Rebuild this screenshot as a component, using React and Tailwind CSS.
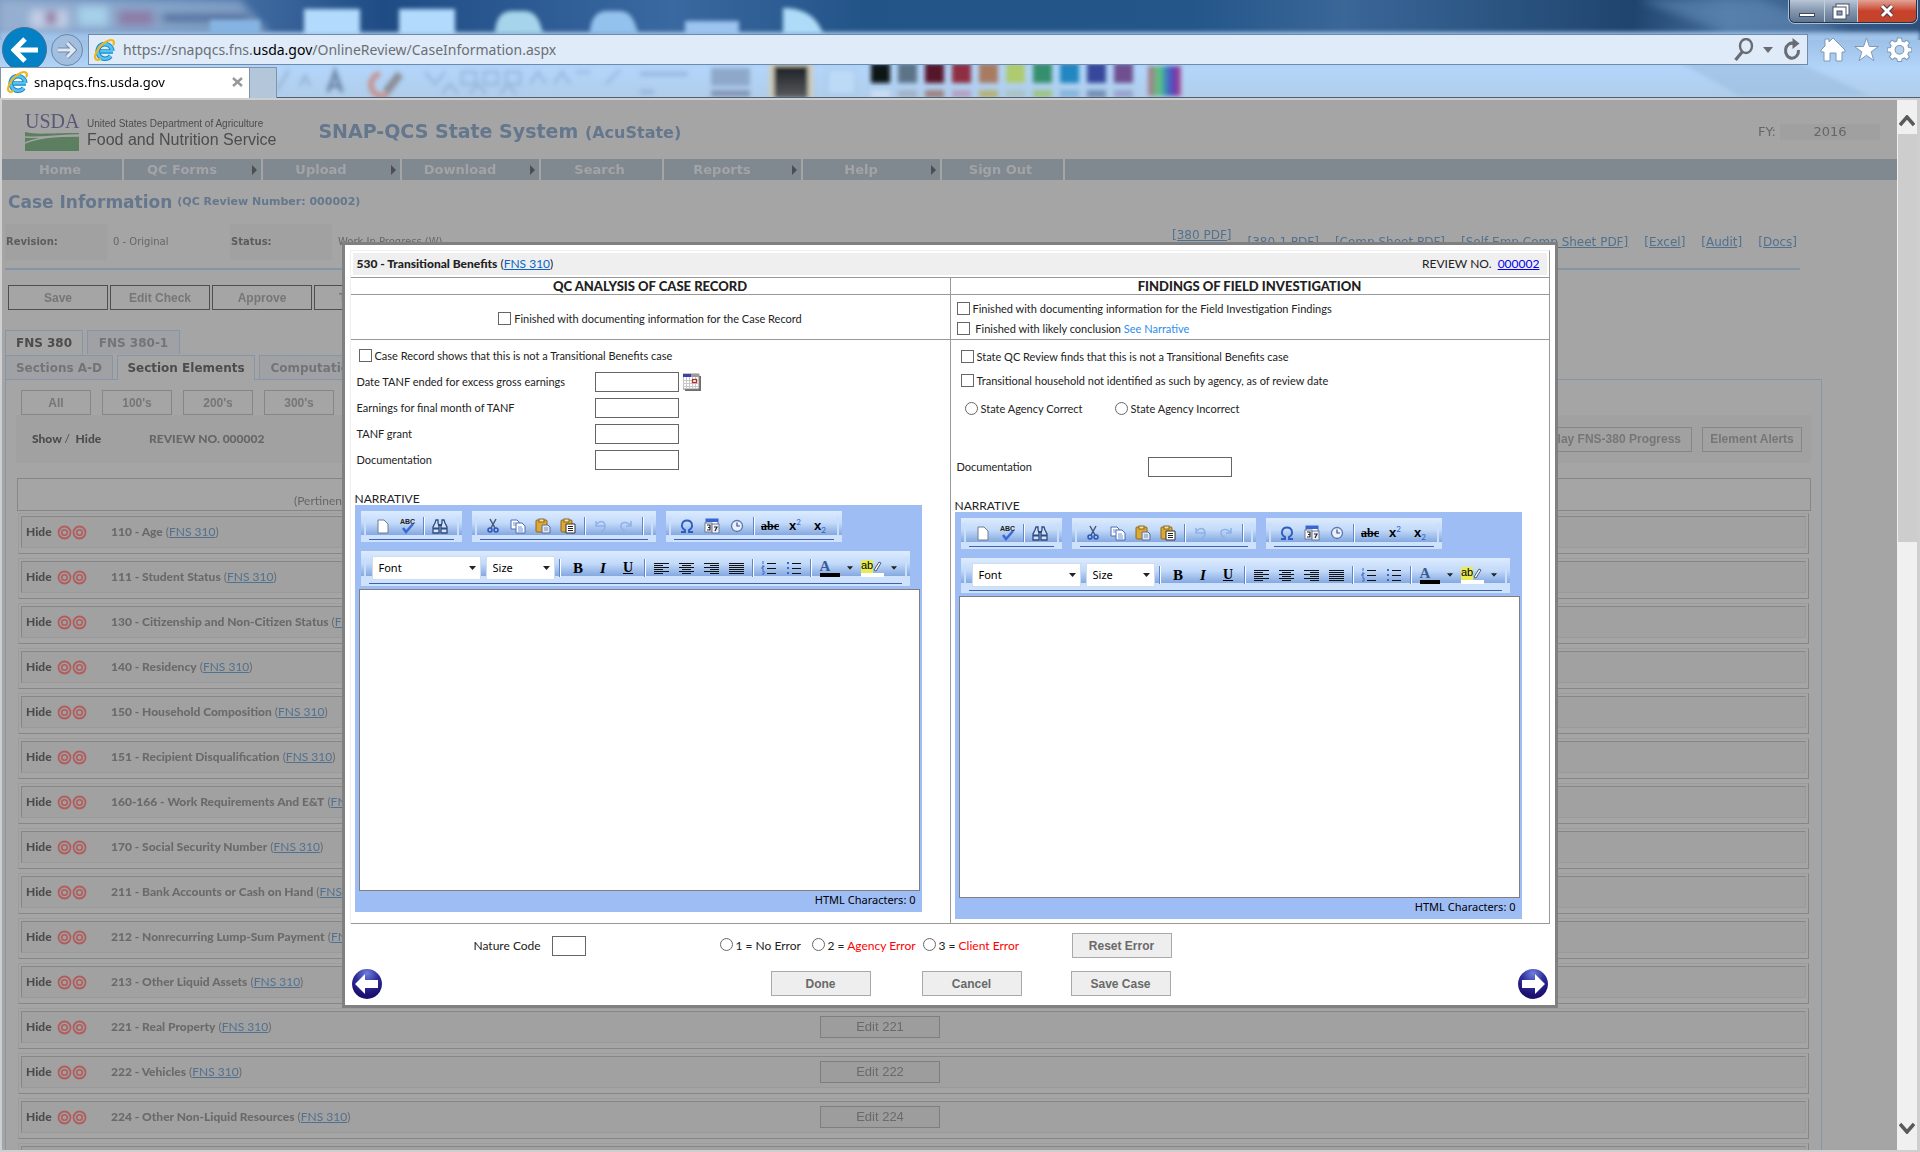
import { Fragment } from 'react';

const MENU = [
  { label: 'Home', width: 'w-[122px]' },
  { label: 'QC Forms', width: 'w-[139px]', sub: true },
  { label: 'Upload', width: 'w-[139px]', sub: true },
  { label: 'Download', width: 'w-[139px]', sub: true },
  { label: 'Search', width: 'w-[123px]' },
  { label: 'Reports', width: 'w-[139px]', sub: true },
  { label: 'Help', width: 'w-[139px]', sub: true },
  { label: 'Sign Out', width: 'w-[123px]' },
];

const ELEMENTS = [
  ['110', 'Age'],
  ['111', 'Student Status'],
  ['130', 'Citizenship and Non-Citizen Status'],
  ['140', 'Residency'],
  ['150', 'Household Composition'],
  ['151', 'Recipient Disqualification'],
  ['160-166', 'Work Requirements And E&T'],
  ['170', 'Social Security Number'],
  ['211', 'Bank Accounts or Cash on Hand'],
  ['212', 'Nonrecurring Lump-Sum Payment'],
  ['213', 'Other Liquid Assets'],
  ['221', 'Real Property'],
  ['222', 'Vehicles'],
  ['224', 'Other Non-Liquid Resources'],
  ['225', 'Combined Resources'],
];

const SWATCHES = ['#0c1218', '#5d7388', '#561329', '#8f2f42', '#a87a62', '#aecb70', '#348f6c', '#2487c0', '#38479a', '#6f4f90'];
const SWATCHES_LOW = ['#c9dcf2', '#a3b3c9', '#9c8484', '#b4a2c4', '#b4b27c', '#a9c4c4', '#9cc486', '#86b6da', '#7590b4', '#98a4cc'];

/* ---------- browser window ---------- */

function Glass() {
  return (
    <svg className="absolute inset-0 w-full h-full" aria-hidden="true">
      <defs>
        <linearGradient id="sky" x1="0" x2="1">
          <stop offset="0" stopColor="#7e9cc4" />
          <stop offset="0.1" stopColor="#4d78ad" />
          <stop offset="0.2" stopColor="#1f4c84" />
          <stop offset="0.35" stopColor="#3a68a0" />
          <stop offset="0.45" stopColor="#235488" />
          <stop offset="0.62" stopColor="#24568a" />
          <stop offset="0.7" stopColor="#3a6698" />
          <stop offset="0.85" stopColor="#1f456e" />
          <stop offset="0.9" stopColor="#456f9c" />
          <stop offset="1" stopColor="#2b4d78" />
        </linearGradient>
        <linearGradient id="bar" x1="0" x2="0" y1="0" y2="1">
          <stop offset="0" stopColor="#9dc0e6" />
          <stop offset="0.5" stopColor="#b3d5fa" />
          <stop offset="1" stopColor="#b0cdea" />
        </linearGradient>
        <linearGradient id="ink" x1="0" x2="0" y1="0" y2="1">
          <stop offset="0" stopColor="#1b1e24" />
          <stop offset="1" stopColor="#5a5c60" />
        </linearGradient>
        <linearGradient id="rainbow" x1="0" x2="1">
          <stop offset="0" stopColor="#b0708c" />
          <stop offset="0.35" stopColor="#58c880" />
          <stop offset="0.6" stopColor="#3a70c8" />
          <stop offset="0.8" stopColor="#6838b0" />
          <stop offset="1" stopColor="#b0508c" />
        </linearGradient>
        <filter id="soft"><feGaussianBlur stdDeviation="4" /></filter>
        <filter id="softer"><feGaussianBlur stdDeviation="2" /></filter>
      </defs>
      <rect width="100%" height="40" fill="url(#sky)" />
      <g filter="url(#soft)">
        <path d="M0 0h240l30 34H0z" fill="#a9bedb" opacity="0.6" />
        <rect x="30" y="10" width="38" height="18" fill="#c3cfe6" />
        <rect x="46" y="12" width="10" height="12" fill="#8a5a8c" />
        <rect x="78" y="6" width="30" height="20" fill="#a6d0ea" />
        <rect x="118" y="10" width="36" height="16" fill="#8c7ba8" />
        <rect x="162" y="14" width="88" height="8" fill="#3d6296" />
        <path d="M1640 0h120l90 34h-120z" fill="#6a92bc" opacity="0.5" />
      </g>
      <rect y="32" width="100%" height="66" fill="url(#bar)" filter="url(#softer)" />
      <rect y="40" width="100%" height="58" fill="url(#bar)" />
      <g filter="url(#softer)">
        <rect x="210" y="20" width="50" height="14" fill="#86b4e2" />
        <rect x="304" y="9" width="56" height="26" fill="#b2dafc" />
        <rect x="399" y="9" width="56" height="26" fill="#b2dafc" />
        <path d="M495 34c0-14 6-23 16-23h14c10 0 15 9 18 23z" fill="#a6d4ea" />
        <path d="M590 34c0-14 6-23 16-23h14c10 0 15 9 18 23z" fill="#94c2ee" />
        <rect x="685" y="21" width="54" height="14" fill="#9cc4f0" />
        <path d="M783 34V8c20 0 34 8 40 26z" fill="#aedcf8" />
        <path d="M1640 40h110l120 56h-130z" fill="#9bbddd" opacity="0.6" />
        <g opacity="0.6">
          <path d="M277 90l12-20M300 86l5-10 5 10" stroke="#8fa3c0" strokeWidth="3" fill="none" />
          <path d="M328 92l7-20 7 20M331 86h8" stroke="#48607f" strokeWidth="4" fill="none" />
          <path d="M380 74a11 11 0 1 0 8 20" stroke="#d0705c" strokeWidth="6" fill="none" />
          <path d="M386 92l14-18" stroke="#76655c" strokeWidth="8" />
        </g>
        <g opacity="0.45" stroke="#7f9fca" strokeWidth="3" fill="none">
          <path d="M425 72l10 12 10-12M442 94l8-10 8 10M470 94l8-10 8 10M500 94l8-10 8 10" />
          <path d="M462 72h14v12h-14zM484 72h14v12h-14zM506 72h14v12h-14zM530 84l8-12 8 12M554 84l8-12 8 12M576 72h14M606 84l14-14" />
          <path d="M640 74h48M640 92h14" strokeWidth="5" />
        </g>
        <rect x="711" y="68" width="39" height="18" fill="#8ea8ca" />
        <rect x="711" y="90" width="39" height="7" fill="#8498ba" />
        <rect x="769" y="62" width="44" height="36" fill="#d0ccba" />
        <rect x="774" y="66" width="34" height="32" fill="url(#ink)" />
        <rect x="828" y="70" width="27" height="24" fill="#bcdaf6" stroke="#a0c0e4" />
        {SWATCHES.map((c, i) => <rect key={c} x={871 + i * 27} y="63" width="19" height="20" fill={c} />)}
        {SWATCHES_LOW.map((c, i) => <rect key={c} x={871 + i * 27} y="90" width="19" height="8" fill={c} />)}
        <rect x="1148" y="66" width="33" height="30" fill="url(#rainbow)" />
      </g>
    </svg>
  );
}

function IeLogo() {
  return (
    <svg width="24" height="24" viewBox="0 0 24 24" aria-hidden="true">
      <path d="M20 13.500H7.500M19.300 13a7.300 7.300 0 1 0-1.600 5" fill="none" stroke="#1787c9" strokeWidth="4.600" />
      <path d="M20 13.300H8M19.300 13a7.300 7.300 0 1 0-1.600 5" fill="none" stroke="#55c3f0" strokeWidth="2.600" />
      <path d="M20.500 6.500C22 2.500 19 .8 14.500 3 8 6 2.500 13 2 18.500c-.2 3 2 4 5 2.800" fill="none" stroke="#f2b61c" strokeWidth="2.200" strokeLinecap="round" />
    </svg>
  );
}

function WindowButtons() {
  return (
    <div className="flex h-[23px] w-[128px] border border-t-0 border-[#23344c] rounded-b-md overflow-hidden shadow-[0_0_0_1px_#a9bfd8]">
      <button aria-label="Minimize" className="w-[35px] flex items-end justify-center pb-[5px] bg-linear-to-b from-[#b9c6d6] via-[#8496ae] to-[#5f7690] border-r border-[#c3cfdd]">
        <span className="w-4 h-1 bg-white border border-[#3c4a60]" />
      </button>
      <button aria-label="Restore" className="w-[33px] flex items-center justify-center bg-linear-to-b from-[#b9c6d6] via-[#8496ae] to-[#5f7690] border-r border-[#c3cfdd]">
        <svg width="18" height="17" viewBox="0 0 18 17">
          <rect x="4" y="1" width="13" height="11" fill="#fff" stroke="#465066" />
          <rect x="1" y="4" width="13" height="12" fill="#fff" stroke="#465066" />
          <rect x="5" y="8" width="5" height="4" fill="#8b9bb3" stroke="#465066" />
        </svg>
      </button>
      <button aria-label="Close" className="flex-1 flex items-center justify-center bg-linear-to-b from-[#e2a295] via-[#c8412a] to-[#c2452c]">
        <svg width="16" height="14" viewBox="0 0 16 14">
          <path d="M3 2l10 10M13 2L3 12" stroke="#4a3c48" strokeWidth="5" />
          <path d="M3 2l10 10M13 2L3 12" stroke="#fff" strokeWidth="3" />
        </svg>
      </button>
    </div>
  );
}

function BrowserChrome() {
  return (
    <header className="relative shrink-0 h-[98px] border-b border-[#4f5f74] font-['Noto_Sans','Open_Sans',sans-serif]">
      <Glass />
      <div className="relative flex flex-col">
        <div className="h-[34px] flex justify-end pr-[3px]">
          <WindowButtons />
        </div>
        <div className="h-[31px] flex items-center">
          <button aria-label="Back" className="ml-[2px] -my-2 w-[45px] h-[45px] rounded-full bg-[#0481c4] border border-[#3b6f9c] flex items-center justify-center shrink-0">
            <svg width="28" height="26" viewBox="0 0 28 26"><path d="M27 13H5M14 2L3 13l11 11" fill="none" stroke="#fff" strokeWidth="5" /></svg>
          </button>
          <button aria-label="Forward" className="ml-[4px] w-[32px] h-[32px] rounded-full border border-[#6c86a6] bg-[#a3bfdf] flex items-center justify-center shrink-0">
            <svg width="20" height="18" viewBox="0 0 20 18"><path d="M1 9h15M10 2l7 7-7 7" fill="none" stroke="#6f86a4" strokeWidth="5" /><path d="M1 9h15M10 2l7 7-7 7" fill="none" stroke="#dfe8f3" strokeWidth="3" /></svg>
          </button>
          <div className="ml-[5px] flex-1 h-[31px] border border-[#6f8bab] bg-[#dfebf8] flex items-center pl-1 pr-[6px]">
            <IeLogo />
            <div role="textbox" aria-label="Address" className="ml-[6px] flex-1 text-[14px] leading-5 text-[#6b6f74]">
              https://snapqcs.fns.<span className="text-black">usda.gov</span>/OnlineReview/CaseInformation.aspx
            </div>
            <button aria-label="Search" className="flex items-center">
              <svg width="20" height="24" viewBox="0 0 20 24"><ellipse cx="12" cy="8" rx="6" ry="7" fill="none" stroke="#696d73" strokeWidth="2.400" /><path d="M8.500 13.500L1.500 22" stroke="#696d73" strokeWidth="3.200" /></svg>
              <svg className="ml-[9px]" width="10" height="6"><path d="M0 0h10L5 6z" fill="#696d73" /></svg>
            </button>
            <button aria-label="Refresh" className="ml-[10px]">
              <svg width="18" height="23" viewBox="0 0 18 23"><path d="M11 5.500A6.500 7.500 0 1 0 15.500 12" fill="none" stroke="#696d73" strokeWidth="3" /><path d="M9.500 0l7 5.500-7 5.500z" fill="#696d73" /></svg>
            </button>
          </div>
          <div className="w-[112px] flex items-center pl-3 gap-2">
            <button aria-label="Home">
              <svg width="26" height="25" viewBox="0 0 26 25"><path d="M13 1l-4 4V2H5v7l-4 4v2h3v9h6v-8h6v8h6v-9h3v-2z" fill="#fff" stroke="#7d99b8" /></svg>
            </button>
            <button aria-label="Favorites">
              <svg width="25" height="25" viewBox="0 0 25 25"><path d="M12.500 1l2.900 8.500h9l-7.200 5.300 2.700 8.900-7.400-5.400-7.400 5.400 2.700-8.900L.6 9.500h9z" fill="#fff" stroke="#7d99b8" /></svg>
            </button>
            <button aria-label="Tools">
              <svg width="25" height="25" viewBox="0 0 24 24">
                <path d="M10 1h4l.5 3 2 .8L19 3l2.600 2.700-1.600 2.500.8 2 3 .4v3.500l-3 .5-.8 2 1.600 2.500L19 21.700l-2.500-1.600-2 .8-.5 2.700h-4l-.5-2.700-2-.8L5 21.700l-2.700-2.600L4 16.600l-.8-2-3-.5v-3.500l3-.4.8-2-1.700-2.500L5 3l2.500 1.700 2-.8z" fill="#fff" stroke="#7d99b8" />
                <circle cx="12" cy="12.300" r="4.200" fill="#b5cfec" stroke="#7d99b8" />
              </svg>
            </button>
          </div>
        </div>
        <div className="pt-[2px] h-[33px] flex">
          <div className="w-[250px] bg-white border border-b-0 border-[#7f93aa] flex items-center pl-[5px] pr-[6px] pb-[2px]">
            <IeLogo />
            <span className="ml-[4px] flex-1 text-[13px] leading-5 text-black">snapqcs.fns.usda.gov</span>
            <button aria-label="Close tab">
              <svg width="11" height="10" viewBox="0 0 11 10"><path d="M1 1l9 8M10 1L1 9" stroke="#989898" strokeWidth="2.400" /></svg>
            </button>
          </div>
          <button aria-label="New tab" className="w-[27px] bg-[#b3c6da] border-t border-r border-[#7f93aa]" />
        </div>
      </div>
    </header>
  );
}

function Scrollbar() {
  return (
    <div className="w-[20px] shrink-0 bg-[#f0f0f0] flex flex-col items-center" aria-hidden="true">
      <div className="h-[34px] flex items-center pt-2">
        <svg width="16" height="12"><path d="M1 10l7-8 7 8" fill="none" stroke="#5a5a5a" strokeWidth="3.500" /></svg>
      </div>
      <div className="h-[408px] w-[19px] bg-[#cdcdcd]" />
      <div className="flex-1" />
      <div className="h-[28px]">
        <svg width="16" height="12"><path d="M1 2l7 8 7-8" fill="none" stroke="#5a5a5a" strokeWidth="3.500" /></svg>
      </div>
    </div>
  );
}

/* ---------- dimmed case page ---------- */

function UsdaLogo() {
  return (
    <div className="flex items-center gap-[8px]">
      <div className="w-[54px]">
        <p className="font-['Liberation_Serif',serif] text-[20px] leading-[17px] text-[#5a5877] text-center">USDA</p>
        <svg className="mt-[2px] block" width="54" height="19" viewBox="0 0 54 19">
          <path d="M0 0c12 3 24 1 54 1v18H0z" fill="#5c7f60" />
          <path d="M0 5c16 1 34-2 54-2M0 11c14-6 30-7 54-7" stroke="#a5a5a5" strokeWidth="1.500" fill="none" />
        </svg>
      </div>
      <div className="font-['Liberation_Sans',sans-serif] text-[#4c4c4c]">
        <p className="text-[10px] leading-4">United States Department of Agriculture</p>
        <p className="text-[16px] leading-4 font-medium">Food and Nutrition Service</p>
      </div>
    </div>
  );
}

function GreyButton({ children, className }) {
  return (
    <button className={`h-[25px] border font-bold text-[12px] leading-4 text-[#767676] font-['Liberation_Sans',sans-serif] ${className}`}>
      {children}
    </button>
  );
}

function Target() {
  return (
    <svg width="15" height="15" viewBox="0 0 15 15" aria-hidden="true">
      <circle cx="7.500" cy="7.500" r="6" fill="none" stroke="#b25c5c" strokeWidth="1.800" />
      <circle cx="7.500" cy="7.500" r="2.800" fill="none" stroke="#b25c5c" strokeWidth="1.600" />
    </svg>
  );
}

function ElementRow({ code, name }) {
  return (
    <div className="mx-[2px] h-[41px] border border-t-[#9c9c9c] border-l-[#9c9c9c] border-r-[#868686] border-b-[#868686] p-[2px] pb-[5px]">
      <div className="h-full bg-[#a1a1a1] border border-t-[#868686] border-l-[#868686] border-r-[#9a9a9a] border-b-[#9a9a9a] flex items-center text-[12px] leading-4">
        <span className="ml-1 w-[31px] font-black text-[#4c4c4c]">Hide</span>
        <span className="flex w-[54px]"><Target /><Target /></span>
        <span className="w-[709px] text-[#6a6a6a]">
          <b className="font-black">{code} - {name}</b> (<a href="#fns" className="underline text-[#52718f]">FNS 310</a>)
        </span>
        <button className="w-[120px] h-[22px] border border-[#7e7e7e] bg-[#9d9d9d] font-['Liberation_Sans',sans-serif] text-[13px] leading-4 text-[#6a6a6a]">Edit {code}</button>
      </div>
    </div>
  );
}

function CasePage() {
  return (
    <div className="flex-1 min-w-0 bg-[#a5a5a5] overflow-hidden font-['DejaVu_Sans',sans-serif] text-[#666]">
      <div className="h-[59px] pt-[5px] flex items-center pl-[23px] pr-[17px]">
        <UsdaLogo />
        <h1 className="ml-[42px] font-bold text-[19px] leading-6 text-[#64778d]">SNAP-QCS State System <span className="text-[16px]">(AcuState)</span></h1>
        <div className="ml-auto flex items-center gap-1 text-[13px] leading-4">
          <span>FY:</span>
          <span className="w-[100px] text-center bg-[#a0a0a0]">2016</span>
        </div>
      </div>

      <nav className="h-[21px] bg-[#808890] flex text-[13px] font-bold leading-[21px] text-[#a2a4a6]">
        {MENU.map((m) => (
          <a key={m.label} href="#menu" className={`${m.width} shrink-0 border-r-2 border-[#a5a5a5] flex items-center pr-1`}>
            <span className="flex-1 text-center">{m.label}</span>
            {m.sub && <svg className="ml-3" width="5" height="10"><path d="M0 0l5 5-5 5z" fill="#4e4e4e" /></svg>}
          </a>
        ))}
      </nav>

      <h2 className="h-[44px] pl-[6px] flex items-center gap-[5px] font-bold text-[17px] leading-6 text-[#64778d]">
        Case Information <span className="text-[11px]">(QC Review Number: 000002)</span>
      </h2>

      <div className="ml-[3px] mr-[97px] pr-[3px] pb-[8px] h-[46px] border-b-2 border-[#8596a8] flex text-[10px] leading-9">
        <b className="w-[102px] bg-[#a1a1a1] pl-px text-[#5c5c5c]">Revision:</b>
        <span className="w-[123px] pl-[6px]">0 - Original</span>
        <b className="w-[102px] bg-[#a1a1a1] pl-px text-[#5c5c5c]">Status:</b>
        <span className="flex-1 pl-[6px]">Work In Progress (W)</span>
        <div className="flex gap-[16px] text-[12px] underline text-[#52718f]">
          <a href="#pdf" className="leading-[22px]">[380 PDF]</a>
          {['[380-1 PDF]', '[Comp Sheet PDF]', '[Self Emp Comp Sheet PDF]', '[Excel]', '[Audit]', '[Docs]'].map((t) => (
            <a key={t} href="#pdf">{t}</a>
          ))}
        </div>
      </div>

      <div className="mt-[15px] ml-[6px] flex gap-[2px]">
        {['Save', 'Edit Check', 'Approve', 'Transmit'].map((t) => (
          <GreyButton key={t} className="w-[100px] border-[#4f4f4f]">{t}</GreyButton>
        ))}
      </div>

      <div className="ml-[3px] mr-[75px] mt-[20px]">
        <div role="tablist" className="flex gap-1 text-[12px] font-bold leading-6">
          <button role="tab" aria-selected="true" className="w-[78px] h-[25px] border border-b-0 border-[#8596a8] text-[#4c4c4c]">FNS 380</button>
          <button role="tab" className="w-[93px] h-[24px] bg-[#9fa1a4] border border-b-0 border-[#8596a8] text-[#727476]">FNS 380-1</button>
        </div>
        <div role="tablist" className="flex gap-1 text-[12px] font-bold leading-6">
          <button role="tab" className="w-[108px] h-[24px] bg-[#9fa1a4] border border-b-0 border-[#8596a8] text-[#727476]">Sections A-D</button>
          <button role="tab" aria-selected="true" className="w-[138px] h-[25px] -mb-px bg-[#a5a5a5] border border-b-0 border-[#8596a8] text-[#4c4c4c]">Section Elements</button>
          <button role="tab" className="w-[110px] h-[24px] bg-[#9fa1a4] border border-b-0 border-[#8596a8] text-[#727476]">Computation</button>
        </div>
        <div className="border border-[#8596a8] px-[10px] pt-[10px] font-['Lato',sans-serif]">
          <div className="ml-[5px] flex gap-[11px]">
            {['All', "100's", "200's", "300's"].map((t) => (
              <GreyButton key={t} className="w-[70px] border-[#868686]">{t}</GreyButton>
            ))}
          </div>
          <div className="h-[48px] pl-[16px] pr-[9px] bg-[#a1a1a1] flex items-center text-[12px] leading-4 font-black">
            <span className="w-[117px] text-[#4c4c4c]">Show <span className="font-normal">/</span>&nbsp; Hide</span>
            <span>REVIEW NO. 000002</span>
            <GreyButton className="ml-auto px-[10px] border-[#868686]">Display FNS-380 Progress</GreyButton>
            <GreyButton className="ml-[10px] w-[100px] border-[#868686]">Element Alerts</GreyButton>
          </div>
          <div className="mt-[15px] mb-[2px] ml-px h-[33px] border border-[#868686] pl-[276px] pt-[14px] text-[12px] leading-4">(Pertinent facts)</div>
          <div className="flex flex-col gap-1">
            {ELEMENTS.map(([code, name]) => <ElementRow key={code} code={code} name={name} />)}
          </div>
        </div>
      </div>
    </div>
  );
}

/* ---------- rich text editor ---------- */

const icons = {
  doc: <path d="M4 2h6l4 4v9H4z" fill="#fff" stroke="#6f7c92" />,
  spell: <><text x="1" y="6" fontSize="7" fontWeight="bold" fontFamily="Liberation Sans" fill="#222">ABC</text><path d="M4 10l3 4 7-8" fill="none" stroke="#3d68d8" strokeWidth="2.500" /></>,
  find: <><path d="M4 2h2v3l1 3v7H1V9l2-4zM10 2h2l1 3 2 4v6H9V8l1-3z" fill="#d4e2f8" stroke="#2f4a80" strokeWidth="1.300" /><path d="M6 7h4M1 10.500h6M9 10.500h6" stroke="#2f4a80" strokeWidth="2" /></>,
  cut: <><path d="M5 1l5 9M11 1L6 10" stroke="#48577a" strokeWidth="1.500" /><circle cx="5" cy="12" r="2" fill="none" stroke="#2d55b8" strokeWidth="1.500" /><circle cx="11" cy="12" r="2" fill="none" stroke="#2d55b8" strokeWidth="1.500" /></>,
  copy: <><path d="M1 2h6l2 2v7H1z" fill="#fff" stroke="#4c6cb4" /><path d="M6 5h6l3 3v7H6z" fill="#fff" stroke="#4c6cb4" /><path d="M3 5h3M3 7h3M8 9h4M8 11h5M8 13h5" stroke="#6a90dc" /></>,
  paste: <><rect x="1" y="2" width="11" height="12" rx="1" fill="#dda836" stroke="#8a6820" /><rect x="4" y="1" width="5" height="3" fill="#f6e2a0" stroke="#8a6820" /><path d="M7 7h6l2 2v6H7z" fill="#dfe7f6" stroke="#5b6f96" /><path d="M9 10h4M9 12h4" stroke="#7a8eb8" /></>,
  pasteText: <><rect x="1" y="2" width="11" height="12" rx="1" fill="#dda836" stroke="#8a6820" /><rect x="4" y="1" width="5" height="3" fill="#f6e2a0" stroke="#8a6820" /><path d="M6 6h9v9H6z" fill="#fff" stroke="#333" /><path d="M8 8.500h5M8 10.500h5M8 12.500h5" stroke="#222" /></>,
  undo: <path d="M3 8h9c0-5-5-6-8-2M3 3v5h5M12 8c0 3-2 5-4 6" fill="none" stroke="#8eb0e8" strokeWidth="1.500" />,
  redo: <path d="M13 3v5H8M12 7C9 3 3 4 3 8c0 3 2 4 4 5" fill="none" stroke="#8eb0e8" strokeWidth="1.500" />,
  omega: <path d="M2 14h4v-2C3.500 10.500 2.500 8.500 3 6.500 3.500 3.800 5.500 2.500 8 2.500s4.500 1.300 5 4c.5 2-.5 4-3 5.500v2h4" fill="none" stroke="#2e5cc0" strokeWidth="1.900" />,
  date: <><rect x="2" y="1" width="12" height="10" fill="#fff" stroke="#3a66cc" /><rect x="2" y="1" width="12" height="3" fill="#3a66cc" /><rect x="1" y="5" width="7" height="9" fill="#fff" stroke="#6a7a98" /><rect x="8" y="6" width="7" height="9" fill="#eef2fa" stroke="#6a7a98" /><path d="M3 7h3v5H3M4 9.500h2M10 9h3l-2 4" fill="none" stroke="#222" strokeWidth="1.200" /></>,
  time: <><circle cx="8" cy="8" r="5.500" fill="#eaf1fc" stroke="#5a76ac" strokeWidth="1.300" /><path d="M8 4.500V8h3" fill="none" stroke="#3c5080" strokeWidth="1.200" /></>,
};

const icon = (name) => <svg width="16" height="16" viewBox="0 0 16 16" aria-hidden="true">{icons[name]}</svg>;

function Lines({ rows }) {
  return (
    <svg width="15" height="13" aria-hidden="true">
      {rows.map(([x, w], i) => <rect key={i} x={x} y={1 + i * 2} width={w} height="1" fill="#111" />)}
    </svg>
  );
}

const LEFT = [[0, 15], [0, 9], [0, 15], [0, 9], [0, 15], [0, 9]];
const CENTER = [[0, 15], [3, 9], [0, 15], [3, 9], [0, 15], [3, 9]];
const RIGHT = [[0, 15], [6, 9], [0, 15], [6, 9], [0, 15], [6, 9]];
const FULL = [[0, 15], [0, 15], [0, 15], [0, 15], [0, 15], [0, 15]];

function Tool({ label, children, wide }) {
  return <button aria-label={label} className={`${wide ? 'w-[43px]' : 'w-[25px]'} h-[18px] flex items-center justify-center text-black`}>{children}</button>;
}

const Sep = ({ wide }) => (
  <span className={`${wide ? 'w-[11px]' : 'w-2'} h-[18px] flex justify-center`}>
    <span className="w-[2px] border-l border-[#5f86cc] bg-white" />
  </span>
);

const Caret = ({ small }) => (
  <svg width={small ? 6 : 7} height="4" viewBox="0 0 7 4" aria-hidden="true"><path d="M0 0h7L3.500 4z" fill="#222" /></svg>
);

function Strip({ tall, children }) {
  return (
    <div className="bg-[#cfe2fc]">
      <div className={`${tall ? 'h-[25px] pt-[9px]' : 'h-[24px] pt-[6px]'} px-[3px] flex items-center bg-linear-to-b from-[#dcebff] via-[#c3daf9] to-[#84a8e0]`}>
        <span className="mr-1 w-[2px] h-[20px] bg-[#c9defb]" />
        {children}
        <span className="ml-1 w-[2px] h-[20px] bg-[#c9defb]" />
      </div>
      <div className={`${tall ? 'h-[10px] pt-[7px]' : 'h-[7px] pt-1'} px-2`}>
        <div className="h-px bg-[#3e62b0]" />
      </div>
    </div>
  );
}

function Picker({ label, width }) {
  return (
    <span className={`relative ${width} h-[24px]`}>
      <select aria-label={label} defaultValue="" className="w-full h-full appearance-none bg-white border border-[#cfdcee] pl-[6px] text-[11px] leading-4 text-black font-['Noto_Sans',sans-serif]">
        <option value="">{label}</option>
      </select>
      <span className="absolute right-[5px] top-[10px] pointer-events-none flex"><Caret /></span>
    </span>
  );
}

function Editor({ id }) {
  return (
    <div className="w-[567px] bg-[#9fbdf5] pl-[4px] pr-[2px] pt-[6px]">
      <div className="pl-[2px] flex gap-[10px]">
        <Strip>
          <Tool label="New">{icon('doc')}</Tool>
          <Tool label="Spell check">{icon('spell')}</Tool>
          <Sep />
          <Tool label="Find">{icon('find')}</Tool>
        </Strip>
        <Strip>
          <Tool label="Cut">{icon('cut')}</Tool>
          <Tool label="Copy">{icon('copy')}</Tool>
          <Tool label="Paste">{icon('paste')}</Tool>
          <Tool label="Paste as text">{icon('pasteText')}</Tool>
          <Sep />
          <Tool label="Undo">{icon('undo')}</Tool>
          <Tool label="Redo">{icon('redo')}</Tool>
          <Sep />
        </Strip>
        <Strip>
          <Tool label="Symbol">{icon('omega')}</Tool>
          <Tool label="Date">{icon('date')}</Tool>
          <Tool label="Time">{icon('time')}</Tool>
          <Sep />
          <Tool label="Strikethrough"><s className="text-[12px] leading-4 font-['Liberation_Serif',serif] font-bold">abc</s></Tool>
          <Tool label="Superscript"><b className="text-[13px] leading-4 font-['Liberation_Sans',sans-serif]">x</b><span className="self-start text-[8px] leading-[10px] text-[#2e5cc0]">2</span></Tool>
          <Tool label="Subscript"><b className="text-[13px] leading-4 font-['Liberation_Sans',sans-serif]">x</b><span className="self-end text-[8px] leading-[10px] text-[#2e5cc0]">2</span></Tool>
        </Strip>
      </div>
      <div className="pl-[2px] mt-[9px] flex">
        <Strip tall>
          <span className="ml-[2px] mr-[5px] flex"><Picker label="Font" width="w-[109px]" /></span>
          <Picker label="Size" width="w-[69px]" />
          <Sep wide />
          <Tool label="Bold"><b className="font-['Liberation_Serif',serif] text-[15px] leading-4">B</b></Tool>
          <Tool label="Italic"><b className="italic font-['Liberation_Serif',serif] text-[15px] leading-4">I</b></Tool>
          <Tool label="Underline"><b className="underline font-['Liberation_Serif',serif] text-[14px] leading-4">U</b></Tool>
          <Sep />
          <Tool label="Align left"><Lines rows={LEFT} /></Tool>
          <Tool label="Align center"><Lines rows={CENTER} /></Tool>
          <Tool label="Align right"><Lines rows={RIGHT} /></Tool>
          <Tool label="Justify"><Lines rows={FULL} /></Tool>
          <Sep />
          <Tool label="Numbered list">
            <svg width="16" height="14"><path d="M2 0v3M1 5h2v1H1v2h2M1 10h2v3H1" fill="none" stroke="#3d68c8" /><path d="M6 2.500h9M6 7.500h9M6 12.500h9" stroke="#111" /></svg>
          </Tool>
          <Tool label="Bulleted list">
            <svg width="16" height="14"><path d="M1 2h2M1 7h2M1 12h2" stroke="#3d68c8" strokeWidth="2" /><path d="M6 2.500h9M6 7.500h9M6 12.500h9" stroke="#111" /></svg>
          </Tool>
          <Sep />
          <Tool wide label="Font color">
            <span className="w-[20px] mr-[7px] border-b-4 border-black text-left leading-[13px] text-[15px] font-bold text-[#3a5a96] font-['Liberation_Serif',serif]">A</span>
            <Caret small />
          </Tool>
          <Tool wide label="Highlight">
            <span className="flex w-[23px] mr-[7px] border-b-4 border-white">
              <span className="h-[13px] bg-[#e8ec50] text-[11px] leading-[11px] font-['Liberation_Sans',sans-serif]">ab</span>
              <svg width="9" height="12" viewBox="0 0 9 12"><path d="M1 10l5-8 2 1-5 8z" fill="#fff" stroke="#4a5a76" /></svg>
            </span>
            <Caret small />
          </Tool>
        </Strip>
      </div>
      <textarea id={id} className="mt-[3px] block w-full h-[302px] bg-white border border-[#7f7f7f] resize-none" />
      <p className="h-[21px] pr-1 text-right text-[11px] leading-[18px] text-black font-['Noto_Sans',sans-serif]">HTML Characters: 0</p>
    </div>
  );
}

/* ---------- dialog ---------- */

const Check = ({ children, className = '' }) => (
  <label className={`flex items-center gap-[3px] ${className}`}>
    <input type="checkbox" className="appearance-none w-[13px] h-[13px] mb-[2px] bg-white border border-[#666]" />
    <span>{children}</span>
  </label>
);

const Radio = ({ name, children, className = '' }) => (
  <label className={`flex items-center gap-[3px] ${className}`}>
    <input type="radio" name={name} className="appearance-none w-[13px] h-[13px] mb-[2px] rounded-full bg-white border border-[#666]" />
    <span>{children}</span>
  </label>
);

function CalendarIcon() {
  return (
    <svg width="18" height="18" viewBox="0 0 18 18" aria-hidden="true">
      <path d="M2 3h16v15H2z" fill="#3e3e3e" opacity="0.75" />
      <path d="M0 1h16v15H0z" fill="#fff" stroke="#888" />
      <path d="M0 1h16v3H0z" fill="#9a9a9a" /><path d="M0 1h8v3H0z" fill="#3b3fa8" />
      <path d="M3.500 4v12M6.500 4v12M9.500 4v12M12.500 4v12M0 7.500h16M0 10.500h16M0 13.500h16" stroke="#c8c8c8" />
      <rect x="9.500" y="6.500" width="4" height="3" fill="#fff" stroke="#b03030" strokeWidth="1.300" />
    </svg>
  );
}

function ArrowButton({ label, flip }) {
  return (
    <button aria-label={label}>
      <svg width="30" height="30" viewBox="0 0 30 30" className={flip ? 'rotate-180' : ''}>
        <defs>
          <radialGradient id={flip ? 'ballR' : 'ballL'} cx="0.5" cy={flip ? 0.85 : 0.15} r="0.75">
            <stop offset="0" stopColor="#6f7fdc" />
            <stop offset="0.5" stopColor="#2f2f9c" />
            <stop offset="1" stopColor="#1c0f6e" />
          </radialGradient>
        </defs>
        <circle cx="15" cy="15" r="15" fill={flip ? 'url(#ballR)' : 'url(#ballL)'} />
        <path d="M3 15L13 5v6h13v8H13v6z" fill="#fff" />
      </svg>
    </button>
  );
}

const DialogButton = ({ children, className = '' }) => (
  <button className={`w-[100px] h-[25px] shrink-0 bg-[#eee] border border-[#a9a9a9] font-bold text-[12px] leading-4 text-[#696969] font-['Liberation_Sans',sans-serif] ${className}`}>
    {children}
  </button>
);

const FIELDS = ['Date TANF ended for excess gross earnings', 'Earnings for final month of TANF', 'TANF grant', 'Documentation'];
const input = 'h-[20px] bg-white border border-[#666]';

function Dialog() {
  return (
    <div role="dialog" aria-label="530 - Transitional Benefits" className="w-[1216px] bg-white border-[3px] border-[#808080] px-[5px] pt-[5px] font-['Lato',sans-serif] text-[12px] leading-4 text-[#222]">
      <div className="border-t border-l border-r border-t-[#eee] border-l-[#eee] border-r-[#999]">
        <div className="p-[2px] border-b border-[#999]">
          <div className="h-[22px] bg-[#efefef] px-1 flex items-center justify-between">
            <span><b className="font-black">530 - Transitional Benefits</b> (<a href="#fns" className="underline text-[#0a64c8]">FNS 310</a>)</span>
            <span>REVIEW NO. &nbsp;<a href="#review" className="underline text-[#0000ee]">000002</a>&nbsp;</span>
          </div>
        </div>

        <div className="grid grid-cols-[600px_1fr] text-[11px] [&>*]:border-b [&>*]:border-[#999] [&>*:nth-child(odd)]:border-r">
          <h3 className="h-[17px] text-center text-[13px] font-black">QC ANALYSIS OF CASE RECORD</h3>
          <h3 className="h-[17px] text-center text-[13px] font-black">FINDINGS OF FIELD INVESTIGATION</h3>

          <div className="h-[45px] pt-1 flex items-center justify-center">
            <Check>Finished with documenting information for the Case Record</Check>
          </div>
          <div className="h-[45px] pt-1 pl-[6px]">
            <Check className="h-5">Finished with documenting information for the Field Investigation Findings</Check>
            <Check className="h-5">&nbsp;Finished with likely conclusion <a href="#narrative" className="text-[#2b8df0]">See Narrative</a></Check>
          </div>

          <div className="pt-[3px] pl-[4px]">
            <Check className="h-[26px] ml-1">Case Record shows that this is not a Transitional Benefits case</Check>
            {FIELDS.map((f, i) => (
              <div key={f} className="h-[26px] ml-[2px] flex items-center">
                <label htmlFor={`f${i}`} className="w-[238px]">{f}</label>
                <input id={`f${i}`} className={`w-[84px] ${input}`} />
                {i === 0 && <button aria-label="Pick a date" className="ml-1"><CalendarIcon /></button>}
              </div>
            ))}
            <label htmlFor="n1" className="block mt-[20px] text-[12px] leading-3">NARRATIVE</label>
            <Editor id="n1" />
          </div>

          <div className="pt-[5px] pl-[4px]">
            <Check className="h-6 ml-[6px]">State QC Review finds that this is not a Transitional Benefits case</Check>
            <Check className="h-6 ml-[6px]">Transitional household not identified as such by agency, as of review date</Check>
            <div className="h-8 ml-[10px] flex">
              <Radio name="agency" className="w-[150px]">State Agency Correct</Radio>
              <Radio name="agency">State Agency Incorrect</Radio>
            </div>
            <div className="mt-[29px] h-[26px] ml-[2px] flex items-center">
              <label htmlFor="doc2" className="w-[191px]">Documentation</label>
              <input id="doc2" className={`w-[84px] ${input}`} />
            </div>
            <label htmlFor="n2" className="block mt-[20px] text-[12px] leading-3">NARRATIVE</label>
            <Editor id="n2" />
            <div className="h-1" />
          </div>
        </div>
      </div>

      <div className="py-[9px] px-[2px] flex flex-col gap-[13px]">
        <div className="h-[25px] pl-[122px] flex items-center">
          <label htmlFor="nature" className="w-[78px]">Nature Code</label>
          <input id="nature" className={`w-[34px] mr-[134px] ${input}`} />
          {[['1', 'No Error', 'w-[92px]'], ['2', 'Agency Error', 'w-[111px]'], ['3', 'Client Error', 'w-[149px]']].map(([n, t, w]) => (
            <Fragment key={n}>
              <Radio name="error" className={w}>{n} = <span className={n === '1' ? '' : 'text-[#f00]'}>{t}</span></Radio>
            </Fragment>
          ))}
          <DialogButton>Reset Error</DialogButton>
        </div>
        <div className="h-[25px] flex items-center">
          <ArrowButton label="Previous element" />
          <DialogButton className="ml-[389px]">Done</DialogButton>
          <DialogButton className="ml-[51px]">Cancel</DialogButton>
          <DialogButton className="ml-[49px] mr-auto">Save Case</DialogButton>
          <ArrowButton label="Next element" flip />
        </div>
      </div>
    </div>
  );
}

export default function App() {
  return (
    <div className="h-screen flex flex-col overflow-hidden bg-[#a5a5a5]">
      <BrowserChrome />
      <main className="relative flex-1 min-h-0 flex border-2 border-r-[3px] border-[#cfcfcf]">
        <CasePage />
        <Scrollbar />
        <div className="absolute inset-y-0 left-0 right-[20px] pt-[142px] flex justify-center items-start">
          <Dialog />
        </div>
      </main>
    </div>
  );
}
